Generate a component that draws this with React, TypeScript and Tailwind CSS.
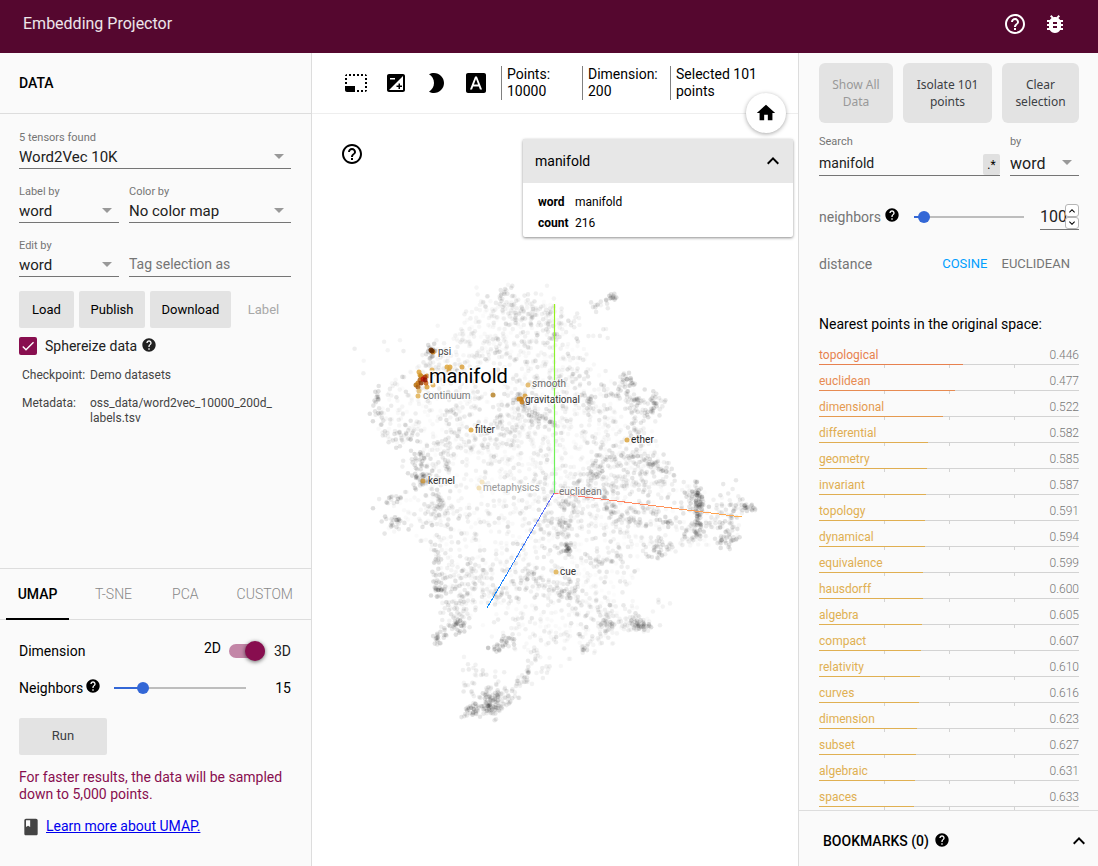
import { useState } from "react";
import type { ReactNode } from "react";
import {
  MdBook,
  MdBrightness2,
  MdBugReport,
  MdCheck,
  MdExposure,
  MdFontDownload,
  MdHelp,
  MdHelpOutline,
  MdHome,
  MdKeyboardArrowDown,
  MdKeyboardArrowUp,
  MdPhotoSizeSelectSmall,
} from "react-icons/md";

type Neighbor = { word: string; dist: number; color: string };

const NEIGHBORS: Neighbor[] = [
  { word: "topological", dist: 0.446, color: "#e7814f" },
  { word: "euclidean", dist: 0.477, color: "#e78b52" },
  { word: "dimensional", dist: 0.522, color: "#e59a50" },
  { word: "differential", dist: 0.582, color: "#e0ad51" },
  { word: "geometry", dist: 0.585, color: "#e0ae51" },
  { word: "invariant", dist: 0.587, color: "#e0ae51" },
  { word: "topology", dist: 0.591, color: "#e0af51" },
  { word: "dynamical", dist: 0.594, color: "#e0af51" },
  { word: "equivalence", dist: 0.599, color: "#e0af51" },
  { word: "hausdorff", dist: 0.6, color: "#e0af51" },
  { word: "algebra", dist: 0.605, color: "#e0b052" },
  { word: "compact", dist: 0.607, color: "#e0b052" },
  { word: "relativity", dist: 0.61, color: "#e0b052" },
  { word: "curves", dist: 0.616, color: "#e0b052" },
  { word: "dimension", dist: 0.623, color: "#e0b052" },
  { word: "subset", dist: 0.627, color: "#e0b052" },
  { word: "algebraic", dist: 0.631, color: "#e0b052" },
  { word: "spaces", dist: 0.633, color: "#e0b052" },
];

// outline of the cloud, in scene units
const HULL = [
  [505, 290], [482, 302], [465, 320], [432, 345], [398, 378], [374, 395], [376, 425],
  [385, 440], [415, 450], [414, 485], [386, 502], [386, 528], [430, 548], [434, 590],
  [442, 625], [470, 618], [500, 605], [545, 645], [600, 635], [650, 622], [625, 590],
  [645, 562], [690, 548], [735, 542], [750, 508], [712, 492], [690, 485], [662, 458],
  [648, 410], [630, 385], [592, 362], [575, 325], [545, 300],
];

// cx, cy, spread x, spread y, count, opacity
const CLUSTERS = [
  [507, 294, 4, 4, 14, 0.1], [519, 310, 8, 7, 40, 0.09], [495, 320, 14, 12, 50, 0.06],
  [540, 314, 8, 7, 30, 0.07], [482, 340, 13, 10, 45, 0.06], [553, 336, 3, 7, 14, 0.13],
  [432, 350, 2, 3, 14, 0.16], [450, 365, 16, 8, 30, 0.08], [376, 395, 2, 4, 9, 0.14],
  [378, 417, 3, 4, 12, 0.14], [402, 436, 7, 4, 26, 0.12], [418, 460, 5, 8, 28, 0.14],
  [423, 479, 5, 4, 30, 0.14], [393, 499, 6, 4, 16, 0.13], [440, 500, 4, 10, 22, 0.11],
  [446, 448, 3, 12, 22, 0.12], [540, 418, 6, 4, 30, 0.12], [507, 430, 9, 9, 30, 0.1],
  [521, 401, 4, 4, 20, 0.14], [475, 436, 12, 8, 30, 0.09], [538, 370, 12, 30, 60, 0.06],
  [612, 298, 2, 2, 12, 0.15], [597, 306, 5, 2, 12, 0.1], [577, 321, 3, 3, 7, 0.08],
  [597, 332, 7, 4, 6, 0.08], [626, 382, 4, 5, 26, 0.13], [611, 387, 4, 4, 12, 0.12],
  [639, 400, 7, 4, 24, 0.12], [653, 404, 3, 5, 24, 0.14], [645, 413, 6, 4, 12, 0.1],
  [638, 431, 4, 7, 18, 0.12], [588, 398, 4, 6, 20, 0.12], [568, 375, 8, 10, 30, 0.08],
  [594, 468, 4, 4, 16, 0.14], [610, 456, 9, 4, 24, 0.11], [634, 457, 5, 3, 12, 0.13],
  [652, 463, 6, 4, 24, 0.12], [665, 470, 5, 4, 14, 0.12], [640, 480, 9, 6, 26, 0.1],
  [584, 484, 12, 6, 44, 0.1], [690, 488, 4, 4, 14, 0.12], [697, 497, 3, 4, 26, 0.14],
  [699, 508, 3, 5, 36, 0.16], [699, 525, 3, 6, 20, 0.13], [692, 532, 4, 7, 20, 0.12],
  [727, 520, 4, 6, 20, 0.12], [728, 540, 4, 4, 26, 0.13], [748, 507, 3, 2, 14, 0.15],
  [734, 502, 9, 6, 16, 0.1], [660, 548, 6, 5, 30, 0.11], [667, 521, 4, 2, 12, 0.14],
  [630, 516, 8, 6, 34, 0.11], [609, 503, 4, 7, 22, 0.12], [565, 512, 5, 9, 30, 0.11],
  [563, 524, 2, 2, 10, 0.15], [568, 549, 3, 3, 22, 0.14], [545, 532, 8, 9, 24, 0.1],
  [602, 558, 11, 4, 26, 0.08], [395, 524, 5, 3, 20, 0.13], [440, 508, 6, 6, 24, 0.11],
  [437, 560, 2, 8, 16, 0.13], [438, 588, 2, 4, 18, 0.15], [455, 590, 7, 9, 26, 0.12],
  [476, 572, 10, 9, 40, 0.09], [491, 592, 6, 5, 18, 0.1], [438, 639, 2, 2, 12, 0.14],
  [448, 631, 4, 3, 18, 0.13], [460, 624, 4, 3, 22, 0.14], [462, 608, 7, 8, 20, 0.11],
  [495, 649, 3, 2, 14, 0.14], [505, 641, 4, 3, 20, 0.13], [518, 625, 8, 8, 20, 0.07],
  [534, 655, 3, 5, 12, 0.09], [583, 649, 2, 2, 10, 0.11], [641, 625, 4, 2, 28, 0.15],
  [606, 622, 3, 4, 20, 0.12], [625, 625, 12, 4, 34, 0.08], [600, 633, 6, 5, 16, 0.08],
  [567, 591, 8, 5, 30, 0.11], [590, 605, 9, 5, 26, 0.09], [540, 588, 7, 5, 20, 0.1],
  [530, 575, 10, 4, 22, 0.1], [658, 604, 5, 4, 5, 0.07], [494, 704, 5, 5, 56, 0.13],
  [484, 709, 9, 3, 44, 0.12], [472, 709, 3, 3, 18, 0.13], [505, 697, 6, 5, 26, 0.1],
  [482, 686, 10, 8, 34, 0.08], [476, 670, 6, 4, 8, 0.08], [521, 682, 4, 3, 12, 0.09],
  [529, 674, 4, 3, 12, 0.11], [545, 670, 5, 3, 8, 0.07], [560, 640, 28, 9, 34, 0.04],
  [450, 400, 30, 24, 80, 0.07], [555, 440, 30, 28, 120, 0.05], [620, 500, 40, 14, 100, 0.08],
];

// x, y, fill: the selected word and its neighbors
const HITS: [number, number, string][] = [
  [433, 352, "#c97a10"], [431, 350, "#6d3000"], [432, 351, "#5d2800"],
  [449, 371, "#d99e36"], [447, 367, "#dda63d"], [450, 367, "#dda63d"], [462, 367, "#d9a03c"],
  [419, 372, "#dda63d"], [420, 375, "#d99e36"], [432, 370, "#e0ad51"], [436, 374, "#f0d9a4"],
  [474, 382, "#f3e2bb"], [416, 385, "#b3700f"], [418, 387, "#a85c10"], [418, 383, "#c57512"],
  [427, 387, "#d99e36"], [433, 385, "#e0ad51"], [421, 376, "#c8881c"], [427, 376, "#cf8820"],
  [420, 380, "#b06010"], [426, 383, "#c86010"], [425, 377, "#a83a08"], [421, 383, "#8f3a08"],
  [423, 379, "#c01000"], [425, 380, "#8f1000"], [419, 391, "#e3bb6d"], [418, 396, "#e0b052"],
  [493, 395, "#b9852c"], [528, 385, "#e3b560"], [521, 399, "#b8700c"], [525, 396, "#d99e36"],
  [522, 402, "#c57c18"], [519, 399, "#cf8820"], [471, 430, "#dda63d"], [627, 440, "#dba43c"],
  [423, 481, "#c99338"], [479, 488, "#f1dcab"], [482, 482, "#f3e2bb"], [556, 572, "#dfb252"],
];

const LABELS: [number, number, string, string][] = [
  [438, 355, "psi", "#444444"],
  [423, 399, "continuum", "#777777"],
  [532, 387, "smooth", "#666666"],
  [525, 403, "gravitational", "#333333"],
  [475, 433, "filter", "#333333"],
  [631, 443, "ether", "#222222"],
  [428, 484, "kernel", "#333333"],
  [483, 491, "metaphysics", "#999999"],
  [559, 495, "euclidean", "#777777"],
  [560, 575, "cue", "#333333"],
];

function makeRandom(seed: number) {
  let s = seed;
  return () => {
    s = (s + 0x6d2b79f5) | 0;
    let t = Math.imul(s ^ (s >>> 15), 1 | s);
    t = (t + Math.imul(t ^ (t >>> 7), 61 | t)) ^ t;
    return ((t ^ (t >>> 14)) >>> 0) / 4294967296;
  };
}

function insideHull(x: number, y: number) {
  let inside = false;
  for (let i = 0, j = HULL.length - 1; i < HULL.length; j = i++) {
    const [xi, yi] = HULL[i];
    const [xj, yj] = HULL[j];
    if (yi > y !== yj > y && x < ((xj - xi) * (y - yi)) / (yj - yi) + xi) inside = !inside;
  }
  return inside;
}

function buildPoints() {
  const rand = makeRandom(42);
  const gauss = () => rand() + rand() + rand() + rand() - 2;
  const points: { x: number; y: number; o: number }[] = [];
  while (points.length < 2100) {
    const x = 370 + rand() * 384;
    const y = 286 + rand() * 360;
    if (!insideHull(x, y)) continue;
    points.push({ x, y, o: 0.012 + rand() * rand() * 0.12 });
  }
  for (const [cx, cy, sx, sy, n, o] of CLUSTERS) {
    for (let i = 0; i < n; i++) {
      points.push({
        x: cx + gauss() * sx * 2.1,
        y: cy + gauss() * sy * 2.1,
        o: o * (0.5 + rand() * 0.5),
      });
    }
  }
  return points;
}

const POINTS = buildPoints();

function Scene() {
  return (
    <svg
      viewBox="312 114 486 752"
      className="absolute inset-0 h-full w-full"
      role="img"
      aria-label="Point cloud"
    >
      <defs>
        <linearGradient id="axis-y" gradientUnits="userSpaceOnUse" x1="554" y1="304" x2="554" y2="493">
          <stop offset="0" stopColor="#99f21a" />
          <stop offset="1" stopColor="#66f266" />
        </linearGradient>
        <linearGradient id="axis-x" gradientUnits="userSpaceOnUse" x1="554" y1="493" x2="742" y2="517">
          <stop offset="0" stopColor="#ff6b6b" />
          <stop offset="1" stopColor="#ffae4a" />
        </linearGradient>
        <linearGradient id="axis-z" gradientUnits="userSpaceOnUse" x1="554" y1="493" x2="487" y2="608">
          <stop offset="0" stopColor="#6f6ff5" />
          <stop offset="1" stopColor="#0088ff" />
        </linearGradient>
      </defs>
      {POINTS.map((p, i) => (
        <circle key={i} cx={p.x.toFixed(1)} cy={p.y.toFixed(1)} r="2.3" fillOpacity={p.o.toFixed(3)} />
      ))}
      <path d="M554.5 304V493" stroke="url(#axis-y)" strokeWidth="1.2" />
      <path d="M554 493L742 517" stroke="url(#axis-x)" shapeRendering="crispEdges" />
      <path d="M554 493L487 608" stroke="url(#axis-z)" shapeRendering="crispEdges" />
      {HITS.map(([x, y, fill], i) => (
        <circle key={i} cx={x} cy={y} r="2.5" fill={fill} fillOpacity="0.85" />
      ))}
      <g
        fontFamily="Roboto, sans-serif"
        fontSize="10"
        stroke="#ffffff"
        strokeWidth="2"
        strokeOpacity="0.7"
        paintOrder="stroke"
      >
        {LABELS.map(([x, y, text, fill]) => (
          <text key={text} x={x} y={y} fill={fill}>
            {text}
          </text>
        ))}
        <text x="429" y="383" fontSize="20" strokeWidth="3" strokeOpacity="0.9">
          manifold
        </text>
      </g>
    </svg>
  );
}

function SelectField({ id, label, value }: { id: string; label: string; value: string }) {
  return (
    <div className="min-w-0">
      <label htmlFor={id} className="block text-[11px] leading-4 text-[#757575]">
        {label}
      </label>
      <div className="relative border-b border-[#757575]">
        <select
          id={id}
          defaultValue={value}
          className="block h-[22px] w-full appearance-none bg-transparent pr-6 text-[15px] text-[#212121] outline-none"
        >
          <option>{value}</option>
        </select>
        <Caret />
      </div>
    </div>
  );
}

function Caret() {
  return (
    <svg
      viewBox="0 0 10 5"
      className="pointer-events-none absolute top-2 right-[7px] h-[5px] w-2.5 fill-[#999999]"
      aria-hidden="true"
    >
      <path d="M0 0h10L5 5z" />
    </svg>
  );
}

type SliderProps = { label: string; min: number; max: number; value: number; onChange: (v: number) => void };

function Slider({ label, min, max, value, onChange }: SliderProps) {
  const pct = Math.min(100, ((value - min) / (max - min)) * 100);
  return (
    <div className="relative h-3 flex-1">
      <div className="absolute inset-x-0 top-[5px] h-0.5 bg-[#bdbdbd]">
        <div className="h-full bg-[#3367d6]" style={{ width: `${pct}%` }} />
      </div>
      <input
        type="range"
        aria-label={label}
        min={min}
        max={max}
        value={value}
        onChange={(e) => onChange(Number(e.target.value))}
        className="absolute -left-1.5 h-3 w-[calc(100%+12px)] appearance-none bg-transparent [&::-webkit-slider-thumb]:h-3 [&::-webkit-slider-thumb]:w-3 [&::-webkit-slider-thumb]:appearance-none [&::-webkit-slider-thumb]:rounded-full [&::-webkit-slider-thumb]:bg-[#3367d6]"
      />
    </div>
  );
}

function GrayButton({ children, className }: { children: ReactNode; className: string }) {
  return (
    <button type="button" className={`h-[37px] rounded-[2px] bg-[#e3e3e3] text-[13px] ${className}`}>
      {children}
    </button>
  );
}

function DataPanel() {
  const [neighbors, setNeighbors] = useState(15);
  return (
    <aside className="flex w-[312px] shrink-0 flex-col border-r border-[#dddddd] bg-[#fafafa]">
      <h2 className="flex h-[61px] shrink-0 items-center border-b border-[#dddddd] px-[19px] text-sm font-medium">
        DATA
      </h2>
      <div className="flex-1 px-[19px] pt-4 pr-5">
        <div className="grid gap-y-[15px]">
          <SelectField id="tensor" label="5 tensors found" value="Word2Vec 10K" />
          <div className="grid grid-cols-[100px_1fr] gap-2.5">
            <SelectField id="label-by" label="Label by" value="word" />
            <SelectField id="color-by" label="Color by" value="No color map" />
          </div>
          <div className="grid grid-cols-[100px_1fr] items-end gap-2.5">
            <SelectField id="edit-by" label="Edit by" value="word" />
            <input
              aria-label="Tag selection as"
              placeholder="Tag selection as"
              className="h-[25px] w-full border-b border-[#757575] bg-transparent text-sm outline-none placeholder:text-[#757575]"
            />
          </div>
        </div>
        <div className="mt-3.5 flex gap-[5px]">
          <GrayButton className="w-[55px]">Load</GrayButton>
          <GrayButton className="w-[66px]">Publish</GrayButton>
          <GrayButton className="w-[81px]">Download</GrayButton>
          <button type="button" disabled className="flex-1 text-[13px] text-[#a8a8a8]">
            Label
          </button>
        </div>
        <div className="mt-2 flex h-5 items-center">
          <label className="flex items-center gap-2 text-sm leading-[18px] text-[#212121]">
            <span className="relative block h-[18px] w-[18px]">
              <input
                type="checkbox"
                defaultChecked
                className="peer block h-[18px] w-[18px] appearance-none rounded-[2px] border-2 border-[#880e4f] checked:bg-[#880e4f]"
              />
              <MdCheck className="pointer-events-none absolute top-px left-px hidden h-4 w-4 text-white peer-checked:block" />
            </span>
            Sphereize data
          </label>
          <MdHelp className="mb-0.5 ml-1 h-4 w-4 text-[#212121]" />
        </div>
        <dl className="mt-3 grid grid-cols-[68px_1fr] gap-y-[13px] pl-[3px] text-xs leading-[15px] text-[#444444]">
          <dt>Checkpoint:</dt>
          <dd>Demo datasets</dd>
          <dt>Metadata:</dt>
          <dd>
            oss_data/word2vec_10000_200d_
            <wbr />
            labels.tsv
          </dd>
        </dl>
      </div>
      <div className="h-[298px] shrink-0 border-t border-[#dddddd]">
        <div className="flex h-[51px] justify-between border-b border-[#dddddd] px-1.5 text-sm font-light text-[#888888]">
          <button type="button" className="-mb-px w-[63px] border-b-2 border-black font-medium text-black">
            UMAP
          </button>
          <button type="button" className="pr-3.5 pl-4">T-SNE</button>
          <button type="button" className="px-4">PCA</button>
          <button type="button" className="px-3">CUSTOM</button>
        </div>
        <div className="px-[19px] pr-5 text-sm">
          <div className="mt-5 flex h-[22px] items-center justify-between">
            <span>Dimension</span>
            <label className="flex items-center">
              <span className="mb-1.5">2D</span>
              <span className="relative mr-[9px] ml-2 block h-5 w-9">
                <input type="checkbox" role="switch" defaultChecked className="peer absolute inset-0 appearance-none" />
                <span className="absolute inset-x-0 top-[3px] h-3.5 rounded-full bg-[#c386a7]" />
                <span className="absolute top-0 right-0 h-5 w-5 rounded-full bg-[#880e4f] shadow-[0_1px_4px_rgba(0,0,0,0.6)]" />
              </span>
              <span className="text-[#212121]">3D</span>
            </label>
          </div>
          <div className="mt-4 flex h-5 items-center">
            <span>Neighbors</span>
            <MdHelp className="mr-[13px] mb-1 ml-0.5 h-4 w-4" />
            <Slider label="Neighbors" min={5} max={50} value={neighbors} onChange={setNeighbors} />
            <span className="w-[45px] text-right">{neighbors}</span>
          </div>
          <GrayButton className="mt-5 w-[88px] text-[#3c4043]">Run</GrayButton>
          <p className="mt-3.5 leading-[17px] text-[#880e4f]">
            For faster results, the data will be sampled down to 5,000 points.
          </p>
          <div className="mt-[13px] flex items-center gap-[5px] pl-0.5">
            <MdBook className="h-5 w-5 text-[#444444]" />
            <a href="#umap" className="pb-0.5 text-[#0000ee] underline">
              Learn more about UMAP.
            </a>
          </div>
        </div>
      </div>
    </aside>
  );
}

const TOOLS = [
  { label: "Bounding box selection", Icon: MdPhotoSizeSelectSmall },
  { label: "Edit current selection", Icon: MdExposure },
  { label: "Night mode", Icon: MdBrightness2 },
  { label: "Toggle labels", Icon: MdFontDownload },
];

function Viewer() {
  return (
    <main className="relative flex min-w-0 flex-1 flex-col bg-white">
      <div className="flex h-[61px] shrink-0 items-center border-b border-[#eeeeee] pl-6">
        {TOOLS.map(({ label, Icon }) => (
          <button key={label} type="button" aria-label={label} className="flex h-10 w-10 items-center justify-center">
            <Icon className="h-6 w-6" />
          </button>
        ))}
        <div className="ml-[5px] flex text-sm leading-[17px]">
          <div className="w-[81px] border-l border-[#808080] pr-5 pl-[5px]">Points: 10000</div>
          <div className="w-[88px] border-l border-[#808080] pr-3 pl-[5px]">Dimension: 200</div>
          <div className="w-[100px] border-l border-[#808080] pl-[5px]">Selected 101 points</div>
        </div>
      </div>
      <div className="relative flex-1">
        <Scene />
        <button type="button" aria-label="Help" className="absolute top-7 left-7">
          <MdHelpOutline className="h-6 w-6" />
        </button>
        <section className="absolute top-[25px] right-[5px] w-[270px] rounded-[2px] bg-white shadow-[0_1px_3px_rgba(0,0,0,0.45)]">
          <button type="button" className="flex h-11 w-full items-center justify-between bg-[#e7e7e7] pr-2 pl-3 text-sm">
            manifold
            <MdKeyboardArrowUp className="h-6 w-6" />
          </button>
          <dl className="grid grid-cols-[37px_1fr] gap-y-1.5 px-[15px] pt-3 pb-1.5 text-xs leading-[15px]">
            <dt className="font-bold">word</dt>
            <dd>manifold</dd>
            <dt className="font-bold">count</dt>
            <dd>216</dd>
          </dl>
        </section>
      </div>
      <button
        type="button"
        aria-label="Reset view"
        className="absolute top-10 right-3 flex h-10 w-10 items-center justify-center rounded-full bg-white shadow-[0_1px_4px_rgba(0,0,0,0.35)]"
      >
        <MdHome className="h-[22px] w-[22px]" />
      </button>
    </main>
  );
}

function NeighborRow({ word, dist, color }: Neighbor) {
  return (
    <li>
      <a href={`#${word}`} className="block h-[26px]">
        <div className="flex h-[18px] justify-between leading-[18px]">
          <span style={{ color }}>{word}</span>
          <span className="font-light text-[#777777]">{dist.toFixed(3)}</span>
        </div>
        <div className="h-px bg-[#d3d3d3]">
          <div className="h-full" style={{ width: `${(1 - dist) * 100}%`, backgroundColor: color }} />
        </div>
        <div className="grid h-[3px] grid-cols-4">
          <span />
          <span className="border-l border-[#d3d3d3]" />
          <span className="border-l border-[#d3d3d3]" />
          <span className="border-l border-[#d3d3d3]" />
        </div>
      </a>
    </li>
  );
}

function InspectorPanel() {
  const [count, setCount] = useState(100);
  const [query, setQuery] = useState("manifold");
  return (
    <aside className="flex w-[300px] shrink-0 flex-col border-l border-[#dddddd] bg-[#fafafa]">
      <div className="flex min-h-0 flex-1 flex-col overflow-hidden pr-[19px] pl-5">
        <div className="mt-2.5 flex shrink-0 gap-2.5 font-['Noto_Sans',sans-serif] text-xs leading-[17px] text-[#3c4043]">
          <button type="button" disabled className="h-[60px] w-[74px] rounded-md bg-[#e3e3e3] px-2 text-[#999999]">
            Show All Data
          </button>
          <button type="button" className="h-[60px] w-[89px] rounded-md bg-[#e3e3e3] px-2">
            Isolate 101 points
          </button>
          <button type="button" className="h-[60px] w-[77px] rounded-md bg-[#e3e3e3] px-2">
            Clear selection
          </button>
        </div>
        <div className="mt-[11px] grid shrink-0 grid-cols-[1fr_69px] gap-2.5">
          <div className="min-w-0">
            <label htmlFor="search" className="block text-[11px] leading-4 text-[#757575]">
              Search
            </label>
            <div className="mt-0.5 flex h-6 border-b border-[#757575]">
              <input
                id="search"
                value={query}
                onChange={(e) => setQuery(e.target.value)}
                className="h-[22px] min-w-0 flex-1 bg-transparent text-sm text-[#212121] outline-none"
              />
              <button type="button" aria-label="Regex mode" className="mt-0.5 h-[21px] w-[17px] rounded-[2px] bg-[#e0e0e0] text-xs">
                .*
              </button>
            </div>
          </div>
          <div>
            <label htmlFor="search-by" className="block text-[11px] leading-4 text-[#757575]">
              by
            </label>
            <div className="relative mt-0.5 h-6 border-b border-[#757575]">
              <select
                id="search-by"
                defaultValue="word"
                className="block h-[22px] w-full appearance-none bg-transparent text-base text-[#212121] outline-none"
              >
                <option>word</option>
              </select>
              <Caret />
            </div>
          </div>
        </div>
        <div className="mt-7 flex h-[26px] shrink-0 items-center text-sm text-[#757575]">
          <label htmlFor="neighbor-count">neighbors</label>
          <MdHelp className="mr-3.5 mb-1 ml-[3px] h-4 w-4 text-black" />
          <Slider label="Number of neighbors" min={5} max={999} value={count} onChange={setCount} />
          <div className="relative ml-4 h-[26px] w-[39px] border-b border-[#757575]">
            <input
              id="neighbor-count"
              type="number"
              value={count}
              onChange={(e) => setCount(Number(e.target.value))}
              className="h-[25px] w-full appearance-none bg-transparent text-base text-[#212121] outline-none [&::-webkit-inner-spin-button]:appearance-none"
            />
            <div className="absolute top-0 right-0 flex w-3.5 flex-col text-black">
              <button type="button" aria-label="Increase" onClick={() => setCount(count + 1)} className="flex h-[13px] items-center justify-center rounded-[3px] border border-[#b5b5b5] bg-white">
                <MdKeyboardArrowUp className="h-3 w-3 shrink-0" />
              </button>
              <button type="button" aria-label="Decrease" onClick={() => setCount(count - 1)} className="flex h-3 items-center justify-center rounded-[3px] border border-[#b5b5b5] bg-white">
                <MdKeyboardArrowDown className="h-3 w-3 shrink-0" />
              </button>
            </div>
          </div>
        </div>
        <div className="mt-6 flex h-5 shrink-0 items-center text-sm text-[#757575]">
          <span className="flex-1">distance</span>
          <button type="button" className="mr-3.5 text-[13px] text-[#009eff]">
            COSINE
          </button>
          <button type="button" className="mr-[9px] text-[13px]">
            EUCLIDEAN
          </button>
        </div>
        <h3 className="mt-10 shrink-0 text-sm leading-5 text-black">Nearest points in the original space:</h3>
        <ul className="mt-3 text-xs">
          {NEIGHBORS.map((n) => (
            <NeighborRow key={n.word} {...n} />
          ))}
        </ul>
      </div>
      <div className="flex h-14 shrink-0 items-center border-t border-[#dddddd] pt-1 pr-[7px] pl-6 text-sm font-medium">
        <span>BOOKMARKS (0)</span>
        <MdHelp className="mb-0.5 ml-[5px] h-4 w-4" />
        <button type="button" aria-label="Expand bookmarks" className="ml-auto">
          <MdKeyboardArrowUp className="h-6 w-6" />
        </button>
      </div>
    </aside>
  );
}

export default function App() {
  return (
    <div className="flex h-screen flex-col font-[Roboto,sans-serif] text-black">
      <header className="flex h-[53px] shrink-0 items-center bg-[#55072f] px-[23px] pb-1.5 text-white">
        <h1 className="flex-1 text-base text-white/90">Embedding Projector</h1>
        <div className="flex gap-4 pr-2">
          <a href="#help" aria-label="Help">
            <MdHelpOutline className="h-6 w-6" />
          </a>
          <a href="#bug" aria-label="Report a bug">
            <MdBugReport className="h-6 w-6" />
          </a>
        </div>
      </header>
      <div className="flex min-h-0 flex-1">
        <DataPanel />
        <Viewer />
        <InspectorPanel />
      </div>
    </div>
  );
}
